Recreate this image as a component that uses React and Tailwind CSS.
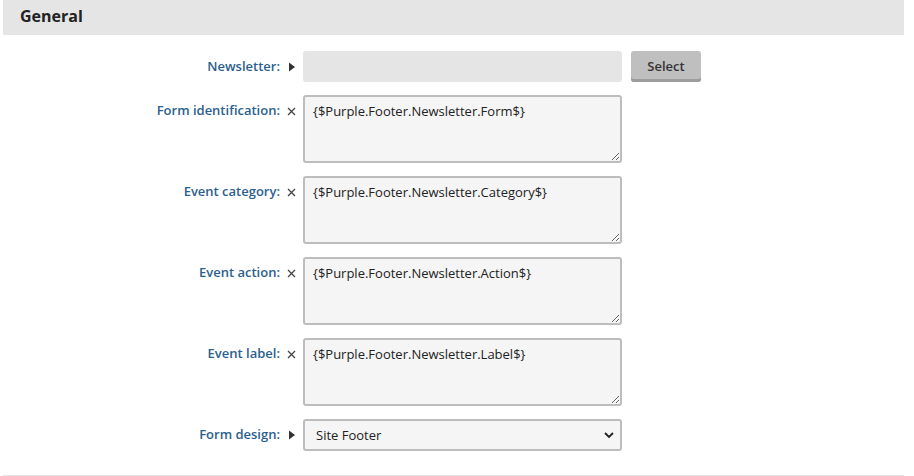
import React from 'react';

const FONT = { fontFamily: '"Open Sans", "Noto Sans", sans-serif' };

const TEXT_FIELDS = [
  { label: 'Form identification:', value: '{$Purple.Footer.Newsletter.Form$}' },
  { label: 'Event category:', value: '{$Purple.Footer.Newsletter.Category$}' },
  { label: 'Event action:', value: '{$Purple.Footer.Newsletter.Action$}' },
  { label: 'Event label:', value: '{$Purple.Footer.Newsletter.Label$}' },
];

const Caret = () => (
  <svg width="8" height="10" viewBox="0 0 8 10" className="block">
    <path d="M1 0.5 L7 5 L1 9.5 Z" fill="#333" />
  </svg>
);

const Cross = () => (
  <svg width="9" height="9" viewBox="0 0 9 9" className="block">
    <path d="M1 1 L8 8 M8 1 L1 8" stroke="#444" strokeWidth="1.3" />
  </svg>
);

// label column: right aligned text + a small icon slot
const Label = ({ children, icon, top }) =>
  top ? (
    <div className="flex w-[300px] shrink-0 items-start justify-end">
      <span className="mt-[6px] text-[13px] font-semibold text-[#2b5f8e]">{children}</span>
      <span className="mt-[12px] flex w-[23px] justify-center">{icon}</span>
    </div>
  ) : (
    <div className="flex w-[300px] shrink-0 items-center justify-end">
      <span className="text-[13px] font-semibold text-[#2b5f8e]">{children}</span>
      <span className="flex w-[23px] justify-center">{icon}</span>
    </div>
  );

export default function App() {
  return (
    <div className="min-h-[476px] w-[914px] bg-white" style={FONT}>
      <div className="ml-[3px] w-[901px]">
        <div className="flex h-[35px] items-center bg-[#e5e5e5] pb-[3px] pl-[17px]">
          <h2 className="text-[16px] font-bold text-[#222]">General</h2>
        </div>

        <div className="flex flex-col gap-[13px] pt-[16px]">
          <div className="flex h-[31px] items-center">
            <Label icon={<Caret />}>Newsletter:</Label>
            <div className="h-[31px] w-[319px] rounded-[3px] bg-[#e5e5e5]" />
            <button className="ml-[9px] h-[31px] w-[70px] rounded-[3px] bg-[#c0bfbf] text-[13px] font-semibold text-[#333] shadow-[inset_0_-3px_0_#9d9d9d]">
              Select
            </button>
          </div>

          {TEXT_FIELDS.map((f) => (
            <div key={f.label} className="flex items-start">
              <Label icon={<Cross />} top>{f.label}</Label>
              <textarea
                readOnly
                defaultValue={f.value}
                className="h-[68px] w-[319px] rounded-[3px] border-2 border-[#bdbdbd] bg-[#f5f5f5] px-[8px] py-[5px] text-[13px] text-[#222] outline-none"
                style={FONT}
              />
            </div>
          ))}

          <div className="flex items-center">
            <Label icon={<Caret />}>Form design:</Label>
            <div className="relative h-[32px] w-[319px] rounded-[3px] border-2 border-[#bdbdbd] bg-[#f5f5f5]">
              <span className="absolute left-[11px] top-[5px] text-[13px] text-[#222]">Site Footer</span>
              <svg width="10" height="7" viewBox="0 0 10 7" className="absolute right-[6px] top-[11px]">
                <path d="M1 1 L5 5 L9 1" stroke="#222" strokeWidth="1.8" fill="none" />
              </svg>
            </div>
          </div>
        </div>

        <div className="mt-[24px] h-px bg-[#e5e5e5]" />
      </div>
    </div>
  );
}
